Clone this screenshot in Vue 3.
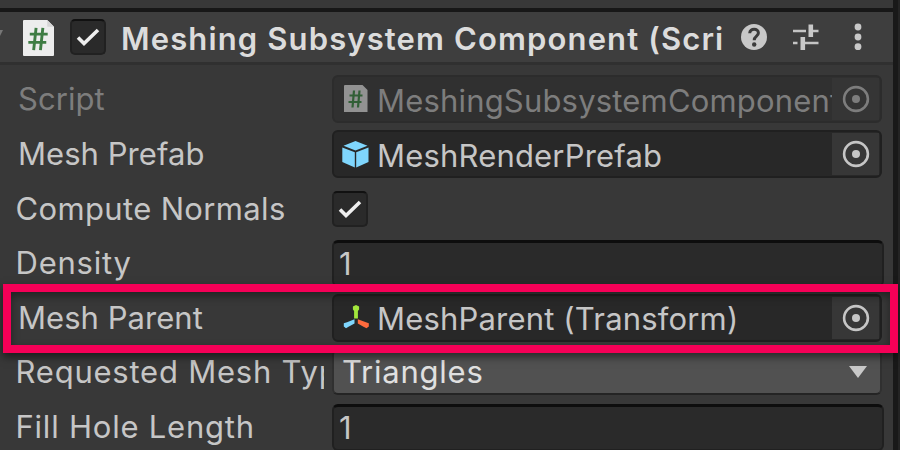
<script setup>
const rows = [
  { label: 'Script', kind: 'object', icon: 'script', value: 'MeshingSubsystemComponent', disabled: true, fit: 'near' },
  { label: 'Mesh Prefab', kind: 'object', icon: 'prefab', value: 'MeshRenderPrefab', fit: 'near' },
  { label: 'Compute Normals', kind: 'check', fit: 'medium' },
  { label: 'Density', kind: 'number', value: '1', fit: 'wide' },
  { label: 'Mesh Parent', kind: 'object', icon: 'transform', value: 'MeshParent (Transform)', fit: 'near' },
  { label: 'Requested Mesh Type', kind: 'select', value: 'Triangles', fit: 'wide' },
  { label: 'Fill Hole Length', kind: 'number', value: '1', fit: 'wide' },
]
</script>

<template>
  <div class="window">
    <main class="panel">
      <div class="previous"></div>
      <header class="header">
        <svg class="fold" viewBox="0 0 6 12"><path d="M0 0H3L0 6Z" fill="#777" /></svg>
        <svg class="doc" viewBox="0 0 32 37">
          <path d="M1 0H25L32 7V36Q32 37 31 37H1Q0 37 0 36V1Q0 0 1 0Z" fill="#ededed" />
          <path d="M25 0V6Q25 7 26 7H32Z" fill="#d5d5d5" />
          <path d="M13.500 8L11 31M20.500 8L18 31M7 14.500H25.500M5.500 23H24" stroke="#3f7d44" stroke-width="3" fill="none" />
        </svg>
        <span class="checkbox">
          <svg viewBox="0 0 24 18"><path d="M2 9.500L8 15.500L22 2" /></svg>
        </span>
        <h1 class="title">Meshing Subsystem Component (Scri</h1>
        <div class="tools">
          <svg class="help" viewBox="0 0 26 26">
            <circle cx="13" cy="13" r="13" fill="#c8c8c8" />
            <path d="M8.700 9.300C8.900 3.800 17.400 3.800 17.400 9C17.400 12.200 13.200 12 13.200 16.200" fill="none" stroke="#3c3c3c" stroke-width="3" />
            <circle cx="13.200" cy="20.500" r="2.200" fill="#3c3c3c" />
          </svg>
          <svg class="sliders" viewBox="0 0 26 26">
            <path d="M0 7H13M20 7H25.500M0 19H4.500M12 19H25.500" stroke="#c4c4c4" stroke-width="2.300" />
            <path d="M17.800 .5V13M9.800 13V26" stroke="#c8c8c8" stroke-width="4.600" />
          </svg>
          <svg class="dots" viewBox="0 0 8 28">
            <circle cx="4" cy="4" r="3.400" /><circle cx="4" cy="14" r="3.400" /><circle cx="4" cy="23.700" r="3.400" />
          </svg>
        </div>
      </header>
      <section class="rows">
        <div v-for="row in rows" :key="row.label" class="row" :class="{ disabled: row.disabled }">
          <span class="label" :class="row.fit">{{ row.label }}</span>
          <div v-if="row.kind === 'object'" class="field object">
            <svg v-if="row.icon === 'script'" class="icon" viewBox="0 0 28 30">
              <path d="M3 1H20.500L25.500 6V28H2V2Q2 1 3 1Z" fill="#929292" />
              <path d="M12 6.500L10.500 23.500M17.500 6.500L16 23.500M7.500 11.500H20.500M6.500 18H19.500" stroke="#315f36" stroke-width="2.200" fill="none" />
            </svg>
            <svg v-else-if="row.icon === 'prefab'" class="icon" viewBox="0 0 28 30">
              <path d="M1.500 6.700L13.500 2L25.500 6.700L13.500 11.500Z" fill="#7fd6fd" />
              <path d="M0.300 8.400L12.800 13.300V28.600L0.300 23Z" fill="#7fd6fd" />
              <path d="M26.500 8.400L14.200 13.300V28.600L26.500 23Z" fill="#7fd6fd" />
            </svg>
            <svg v-else class="icon" viewBox="0 0 28 30">
              <path d="M12.100 15.500V8L10.900 6.500V3.500L14 2L17.100 3.500V6.500L15.900 8V15.500Z" fill="#a3e63c" />
              <path d="M12.500 16.200V20.500L6.500 23.700L4 25.300L1.800 23.500V20.300L5 19.200Z" fill="#7fd6fd" />
              <path d="M15.800 16.200V20.500L21.500 23.700L24.500 25.300L26.800 23.500V20.300L24 19.200Z" fill="#ff6b3d" />
            </svg>
            <span class="value">{{ row.value }}</span>
            <span class="picker">
              <svg viewBox="0 0 28 28">
                <circle cx="14" cy="14" r="11.900" fill="none" stroke="currentColor" stroke-width="2.600" />
                <circle cx="14" cy="14" r="4" fill="currentColor" />
              </svg>
            </span>
          </div>
          <span v-else-if="row.kind === 'check'" class="checkbox">
            <svg viewBox="0 0 24 18"><path d="M2 9.500L8 15.500L22 2" /></svg>
          </span>
          <div v-else-if="row.kind === 'number'" class="field number">{{ row.value }}</div>
          <div v-else class="field select">
            <span>{{ row.value }}</span>
            <svg class="arrow" viewBox="0 0 18 12"><path d="M0 0H18L9 12Z" fill="#c8c8c8" /></svg>
          </div>
        </div>
      </section>
    </main>
    <aside class="edge"></aside>
    <div class="highlight"></div>
  </div>
</template>

<style>
body {
  margin: 0;
  background: #383838;
}
</style>

<style scoped>
.window {
  position: relative;
  display: flex;
  width: 900px;
  height: 450px;
  overflow: hidden;
  background: #383838;
  color: #c6c6c6;
  font-family: Inter, sans-serif;
  font-size: 31px;
  line-height: 40px;
  letter-spacing: 0.78px;
  white-space: nowrap;
}
.window * {
  box-sizing: border-box;
}
.panel {
  width: 893px;
  height: 450px;
  overflow: hidden;
}
.edge {
  width: 7px;
  background: #242424;
  border-left: 5px solid #191919;
}
.previous {
  height: 12px;
  border-bottom: 4px solid #171717;
}
.header {
  display: flex;
  align-items: center;
  height: 53px;
  padding-top: 1px;
  background: #3e3e3e;
  border-bottom: 3px solid #303030;
}
.fold {
  width: 6px;
  height: 12px;
  margin-right: 17px;
  margin-top: -3px;
}
.doc {
  width: 31px;
  height: 36px;
  margin-right: 16px;
}
.checkbox {
  display: flex;
  align-items: center;
  justify-content: center;
  width: 36px;
  height: 36px;
  background: #2a2a2a;
  border: 2px solid #212121;
  border-top-color: #111;
  border-radius: 5px;
}
.header .checkbox {
  margin-top: -2px;
}
.checkbox svg {
  width: 24px;
  height: 18px;
  fill: none;
  stroke: #eee;
  stroke-width: 3.6;
}
.title {
  width: 606px;
  margin: 3px 0 0 15px;
  overflow: hidden;
  color: #dcdcdc;
  font-size: 31px;
  font-weight: 600;
  letter-spacing: 1.13px;
}
.tools {
  display: flex;
  align-items: center;
  margin-left: 14px;
  margin-top: -1px;
}
.help {
  width: 26px;
  height: 26px;
}
.sliders {
  width: 26px;
  height: 26px;
  margin-left: 26px;
}
.dots {
  width: 8px;
  height: 28px;
  margin-left: 35px;
  fill: #c8c8c8;
}
.rows {
  display: grid;
  grid-auto-rows: 54.6px;
  padding-top: 7.2px;
}
.row {
  display: flex;
  align-items: center;
}
.label {
  width: 324px;
  margin-right: 8px;
  padding-left: 15.5px;
  overflow: hidden;
}
.label.near {
  padding-left: 18px;
  letter-spacing: 0.05px;
}
.label.medium {
  letter-spacing: 0.35px;
}
.field {
  display: flex;
  align-items: center;
  width: 550px;
  height: 48px;
  background: #282828;
  border: 2px solid #202020;
  border-radius: 6px;
}
.object {
  padding-right: 1px;
}
.icon {
  flex: none;
  width: 28px;
  height: 30px;
  margin-left: 8px;
}
.value {
  flex: 1;
  min-width: 0;
  margin-left: 7px;
  padding-top: 3px;
  overflow: hidden;
  letter-spacing: 0.18px;
}
.picker {
  display: flex;
  align-items: center;
  justify-content: center;
  flex: none;
  width: 47px;
  height: 42px;
  background: #373737;
}
.picker svg {
  width: 28px;
  height: 28px;
}
.number {
  width: 552px;
  height: 47px;
  padding-left: 5px;
  background: #2a2a2a;
  border-top: 3px solid #0d0d0d;
}
.select {
  justify-content: space-between;
  height: 46px;
  padding: 0 13px 0 8px;
  background: #515151;
  border-color: #303030;
  border-bottom-color: #242424;
  color: #e0e0e0;
}
.arrow {
  width: 18px;
  height: 12px;
}
.disabled {
  color: #7d7d7d;
}
.disabled .field {
  background: #303030;
  border-color: #2c2c2c;
}
.disabled .picker {
  background: #353535;
}
.highlight {
  position: absolute;
  left: 3px;
  top: 284px;
  width: 895px;
  height: 69px;
  border: 8px solid #f50057;
  box-shadow: 0 4px 8px rgba(0, 0, 0, 0.5), inset 0 4px 8px rgba(0, 0, 0, 0.4);
}
</style>
